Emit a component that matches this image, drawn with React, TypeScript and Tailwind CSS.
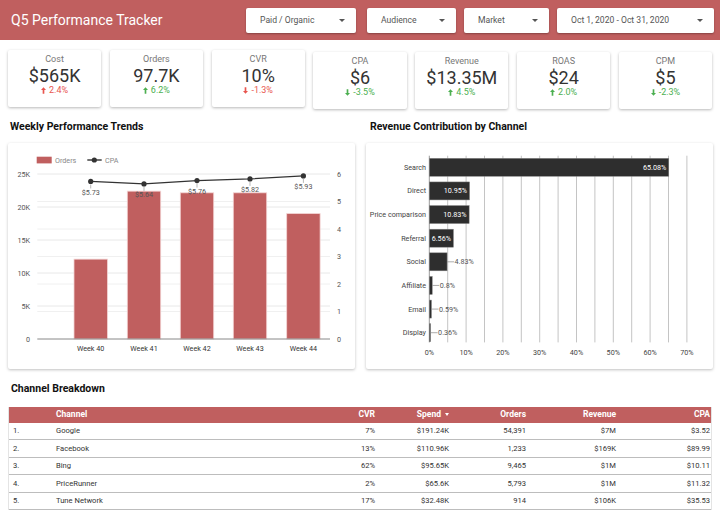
import React from 'react';

const RED = '#c05f5f';

function Caret() {
  return <span className="w-0 h-0 border-l-[3px] border-r-[3px] border-t-[3.5px] border-l-transparent border-r-transparent border-t-[#555]" />;
}

function Dropdown({ label, w, ml }: { label: string; w: string; ml: string }) {
  return (
    <div className={`${w} ${ml} h-[25px] bg-white rounded-[2px] shadow-[0_1px_2px_rgba(0,0,0,0.3)] flex items-center justify-between pl-[14px] pr-[11px] text-[8.6px] text-[#555]`}>
      <span>{label}</span>
      <Caret />
    </div>
  );
}

function Arrow({ up, color }: { up: boolean; color: string }) {
  return (
    <svg width="5" height="7" viewBox="0 0 6 8" className="mr-[3px]" style={{ transform: up ? undefined : 'rotate(180deg)' }}>
      <path d="M3 0 L6 3.5 H4 V8 H2 V3.5 H0 Z" fill={color} />
    </svg>
  );
}

const kpis = [
  { l: 'Cost', v: '$565K', d: '2.4%', up: true, good: false, mt: 'mt-0' },
  { l: 'Orders', v: '97.7K', d: '6.2%', up: true, good: true, mt: 'mt-0' },
  { l: 'CVR', v: '10%', d: '-1.3%', up: false, good: false, mt: 'mt-0' },
  { l: 'CPA', v: '$6', d: '-3.5%', up: false, good: true, mt: 'mt-[2px]' },
  { l: 'Revenue', v: '$13.35M', d: '4.5%', up: true, good: true, mt: 'mt-[2px]' },
  { l: 'ROAS', v: '$24', d: '2.0%', up: true, good: true, mt: 'mt-[2px]' },
  { l: 'CPM', v: '$5', d: '-2.3%', up: false, good: true, mt: 'mt-[2px]' },
];

function Kpi({ k }: { k: (typeof kpis)[number] }) {
  const c = k.good ? '#4caf50' : '#e8554e';
  return (
    <div className={`flex-1 h-[57px] ${k.mt} bg-white shadow-[0_1px_3px_rgba(0,0,0,0.28)] rounded-[2px] flex flex-col items-center pt-[4px]`}>
      <div className="text-[9px] leading-[11px] text-[#777]">{k.l}</div>
      <div className="text-[18px] leading-[18px] mt-[2px] text-[#333]">{k.v}</div>
      <div className="flex items-center text-[9px] leading-[11px]" style={{ color: c }}>
        <Arrow up={k.up} color={c} />
        {k.d}
      </div>
    </div>
  );
}

function WeeklyChart() {
  const y0 = 196;
  const ks = 6.6;
  const cs = 27.5;
  const bars = [
    { w: 'Week 40', x: 66, v: 12.1 },
    { w: 'Week 41', x: 119.3, v: 22.4 },
    { w: 'Week 42', x: 172.3, v: 22.15 },
    { w: 'Week 43', x: 225.3, v: 22.15 },
    { w: 'Week 44', x: 278.7, v: 19.0 },
  ];
  const cpa = [5.73, 5.64, 5.76, 5.82, 5.93];
  const bw = 33.4;
  const pts = bars.map((b, i) => ({ x: b.x + bw / 2, y: y0 - cpa[i] * cs, v: cpa[i] }));
  return (
    <svg width="347" height="226" className="block" fontFamily="Roboto, sans-serif">
      <rect x="28.7" y="13.7" width="15" height="6.7" fill={RED} />
      <text x="47" y="19.6" fontSize="7.2" fill="#888">Orders</text>
      <line x1="79.3" x2="93.7" y1="17" y2="17" stroke="#333" strokeWidth="1.4" />
      <circle cx="86.3" cy="17" r="2.6" fill="#333" />
      <text x="97" y="19.6" fontSize="7.2" fill="#888">CPA</text>
      {[1, 2, 3, 4, 5].map((k) => (
        <line key={'l' + k} x1="29.3" x2="322" y1={y0 - k * 5 * ks} y2={y0 - k * 5 * ks} stroke="#e8e8e8" strokeWidth="1" />
      ))}
      {[1, 2, 3, 4, 5].map((k) => (
        <line key={'r' + k} x1="29.3" x2="322" y1={y0 - k * cs} y2={y0 - k * cs} stroke="#f0f0f0" strokeWidth="1" />
      ))}
      {[0, 1, 2, 3, 4, 5].map((k) => (
        <text key={'ll' + k} x="22" y={y0 - k * 5 * ks + 2.5} fontSize="7.2" fill="#555" textAnchor="end">
          {k === 0 ? '0' : `${k * 5}K`}
        </text>
      ))}
      {[0, 1, 2, 3, 4, 5, 6].map((k) => (
        <text key={'rl' + k} x="329" y={y0 - k * cs + 2.5} fontSize="7.2" fill="#555">
          {k}
        </text>
      ))}
      {bars.map((b) => (
        <g key={b.w}>
          <rect x={b.x} y={y0 - b.v * ks} width={bw} height={b.v * ks} fill={RED} stroke="#f3d3d3" strokeWidth="0.8" />
          <text x={b.x + bw / 2} y="207.5" fontSize="7.2" fill="#333" textAnchor="middle">{b.w}</text>
        </g>
      ))}
      <line x1="29.3" x2="322" y1={y0} y2={y0} stroke="#888" strokeWidth="1" />
      <polyline points={pts.map((p) => `${p.x},${p.y}`).join(' ')} fill="none" stroke="#333" strokeWidth="1.3" />
      {pts.map((p) => (
        <g key={p.x}>
          <line x1={p.x} x2={p.x} y1={p.y + 3} y2={p.y + 7} stroke="#999" strokeWidth="0.7" />
          <circle cx={p.x} cy={p.y} r="2.6" fill="#333" />
          <text x={p.x} y={p.y + 13.5} fontSize="7.2" fill="#555" textAnchor="middle">${p.v.toFixed(2)}</text>
        </g>
      ))}
    </svg>
  );
}

function RevenueChart() {
  const x0 = 63.3;
  const s = 3.68;
  const rows = [
    { n: 'Search', v: 65.08, inside: true },
    { n: 'Direct', v: 10.95, inside: true },
    { n: 'Price comparison', v: 10.83, inside: true },
    { n: 'Referral', v: 6.56, inside: true },
    { n: 'Social', v: 4.83, inside: false },
    { n: 'Affiliate', v: 0.8, inside: false },
    { n: 'Email', v: 0.59, inside: false },
    { n: 'Display', v: 0.36, inside: false },
  ];
  return (
    <svg width="347" height="226" className="block" fontFamily="Roboto, sans-serif">
      {Array.from({ length: 15 }).map((_, k) => (
        <line key={k} x1={x0 + k * 5 * s} x2={x0 + k * 5 * s} y1="12.7" y2="199.4" stroke={k === 0 ? '#999' : '#c4c4c4'} strokeWidth="1" />
      ))}
      {[0, 1, 2, 3, 4, 5, 6, 7].map((k) => (
        <text key={'x' + k} x={x0 + k * 10 * s} y="212" fontSize="7.2" fill="#444" textAnchor="middle">{k * 10}%</text>
      ))}
      {rows.map((r, i) => {
        const cy = 24.3 + i * 23.63;
        const end = x0 + r.v * s;
        const label = `${r.v}%`;
        return (
          <g key={r.n}>
            <text x="60" y={cy + 2.5} fontSize="7.2" fill="#444" textAnchor="end">{r.n}</text>
            <rect x={x0} y={cy - 9} width={r.v * s} height="18" fill="#2e2e2e" stroke="#888" strokeWidth="0.5" />
            {r.inside ? (
              <text x={end - 2.5} y={cy + 2.5} fontSize="7.2" fill="#fff" textAnchor="end">{label}</text>
            ) : (
              <g>
                <line x1={end} x2={end + 7} y1={cy} y2={cy} stroke="#888" strokeWidth="0.7" />
                <text x={end + 7.5} y={cy + 2.5} fontSize="7.2" fill="#555">{label}</text>
              </g>
            )}
          </g>
        );
      })}
    </svg>
  );
}

const tableRows = [
  ['1.', 'Google', '7%', '$191.24K', '54,391', '$7M', '$3.52'],
  ['2.', 'Facebook', '13%', '$110.96K', '1,233', '$169K', '$89.99'],
  ['3.', 'Bing', '62%', '$95.65K', '9,465', '$1M', '$10.11'],
  ['4.', 'PriceRunner', '2%', '$65.6K', '5,793', '$1M', '$11.32'],
  ['5.', 'Tune Network', '17%', '$32.48K', '914', '$106K', '$35.53'],
];

const cols = 'grid grid-cols-[43px_249px_78px_74px_77px_90px_94px]';

export default function App() {
  return (
    <div className="w-[720px] h-[512px] overflow-hidden bg-white font-[Roboto,sans-serif] relative">
      <div className="h-[40px] flex items-center" style={{ backgroundColor: RED }}>
        <div className="pl-[11px] text-[14px] text-white">Q5 Performance Tracker</div>
        <div className="ml-auto flex items-center pr-[6px]">
          <Dropdown label="Paid / Organic" w="w-[110px]" ml="ml-0" />
          <Dropdown label="Audience" w="w-[89px]" ml="ml-[11px]" />
          <Dropdown label="Market" w="w-[85px]" ml="ml-[8px]" />
          <Dropdown label="Oct 1, 2020 - Oct 31, 2020" w="w-[157px]" ml="ml-[8px]" />
        </div>
      </div>

      <div className="mt-[10px] px-[8px] flex items-start gap-[8.7px] h-[59px]">
        {kpis.map((k) => (
          <Kpi key={k.l} k={k} />
        ))}
      </div>

      <div className="mt-[10px] px-[8px] flex gap-[11px]">
        <div className="w-[347px]">
          <div className="pl-[2px] text-[10.5px] leading-[16px] font-bold text-[#111]">Weekly Performance Trends</div>
          <div className="mt-[8px] bg-white shadow-[0_1px_3px_rgba(0,0,0,0.25)] rounded-[2px]">
            <WeeklyChart />
          </div>
        </div>
        <div className="w-[347px]">
          <div className="pl-[4px] text-[10.5px] leading-[16px] font-bold text-[#111]">Revenue Contribution by Channel</div>
          <div className="mt-[8px] bg-white shadow-[0_1px_3px_rgba(0,0,0,0.25)] rounded-[2px]">
            <RevenueChart />
          </div>
        </div>
      </div>

      <div className="mt-[12px] pl-[11px] text-[10.5px] leading-[16px] font-bold text-[#111]">Channel Breakdown</div>
      <div className="mt-[10px] mx-[8px] border-x border-[#e4e4e4]">
        <div className={`${cols} h-[15.5px] items-center text-[8.5px] font-bold text-white`} style={{ backgroundColor: RED }}>
          <div />
          <div className="pl-[4px]">Channel</div>
          <div className="text-right pr-[4px]">CVR</div>
          <div className="pr-[4px] flex items-center justify-end gap-[4px]">
            Spend
            <span className="w-0 h-0 border-l-[2.5px] border-r-[2.5px] border-t-[3px] border-l-transparent border-r-transparent border-t-white" />
          </div>
          <div className="text-right pr-[4px]">Orders</div>
          <div className="text-right pr-[4px]">Revenue</div>
          <div className="text-right pr-[4px]">CPA</div>
        </div>
        {tableRows.map((r) => (
          <div key={r[0]} className={`${cols} h-[17.6px] items-center text-[7.6px] text-[#333] border-b-[1.5px] border-[#bdbdbd]`}>
            <div className="pl-[4px]">{r[0]}</div>
            <div className="pl-[4px]">{r[1]}</div>
            <div className="text-right pr-[4px]">{r[2]}</div>
            <div className="text-right pr-[4px]">{r[3]}</div>
            <div className="text-right pr-[4px]">{r[4]}</div>
            <div className="text-right pr-[4px]">{r[5]}</div>
            <div className="text-right pr-[4px]">{r[6]}</div>
          </div>
        ))}
      </div>
    </div>
  );
}
